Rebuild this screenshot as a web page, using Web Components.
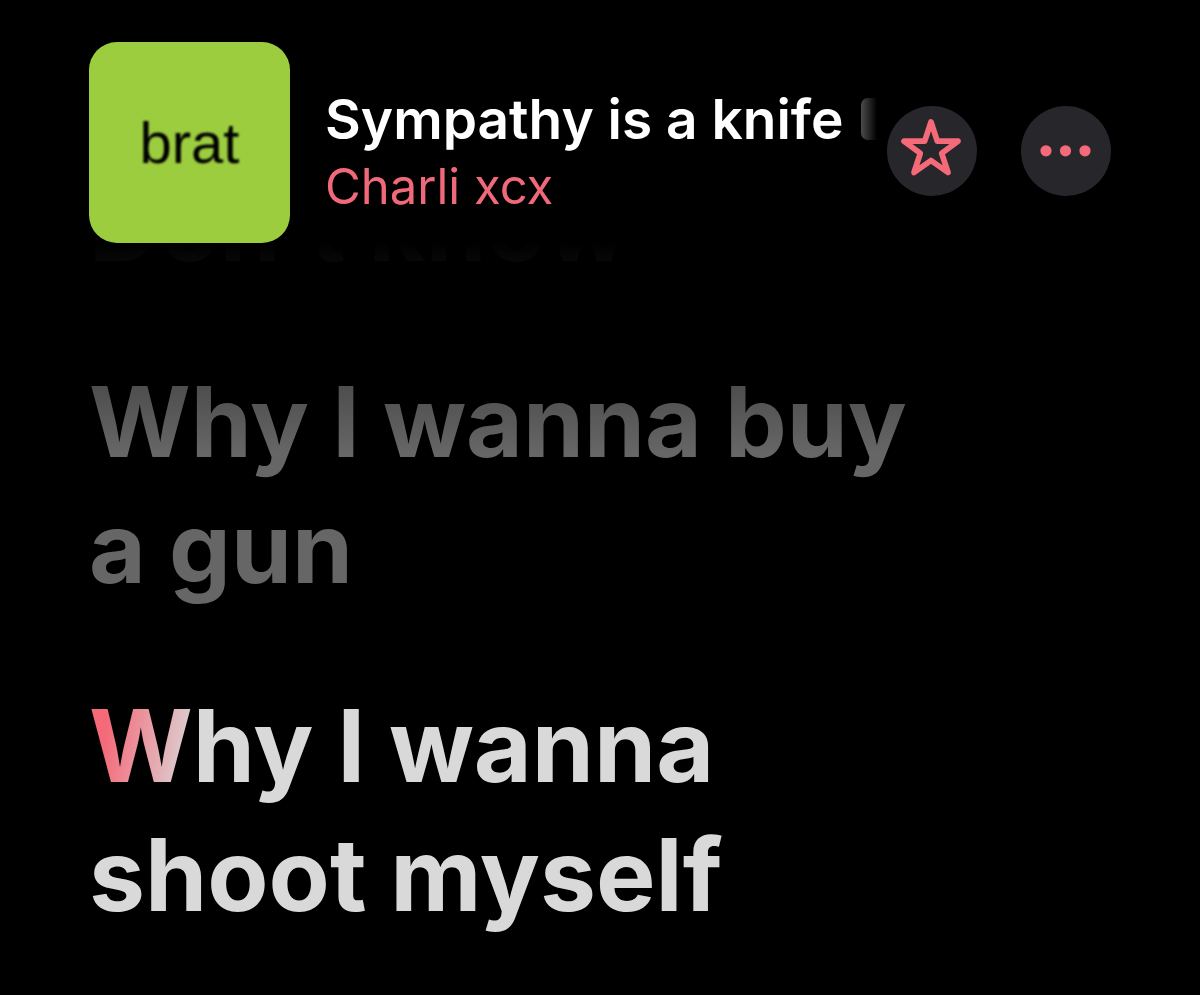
<!DOCTYPE html>
<html lang="en">
<head>
<meta charset="utf-8">
<meta name="viewport" content="width=device-width, initial-scale=1">
<title>Sympathy is a knife</title>
<style>
    body {
        margin: 0;
        min-height: 100vh;
        background: #000;
        color: #fff;
        font-family: Inter, "Liberation Sans", sans-serif;
        --accent: #f0697a;
        --side: 89px;
    }
</style>
</head>
<body>
<now-playing>
    <track-header slot="header">
        <album-art slot="art">brat</album-art>
        <span slot="title">Sympathy is a knife</span>
        <a slot="artist" href="#artist">Charli xcx</a>
        <round-button slot="actions" label="Favorite">
            <svg viewBox="0 0 90 90" fill="none" stroke="#f56a79" stroke-width="5.700" stroke-linejoin="round">
                <path d="M44 16 L50.300 35.200 H71 L54.700 47.300 L61 66.500 L44 54.500 L27 66.500 L33.300 47.300 L17 35.200 H37.700 Z"/>
            </svg>
        </round-button>
        <round-button slot="actions" label="More">
            <svg viewBox="0 0 90 90" fill="#f56a79">
                <circle cx="25" cy="44.800" r="5.600"/>
                <circle cx="44.500" cy="44.800" r="5.600"/>
                <circle cx="64" cy="44.800" r="5.600"/>
            </svg>
        </round-button>
    </track-header>
    <lyric-line>Don’t know</lyric-line>
    <lyric-line>Why I wanna buy a gun</lyric-line>
    <lyric-line active>Why I wanna shoot myself</lyric-line>
</now-playing>

<script>
class NowPlaying extends HTMLElement {
    constructor() {
        super();
        this.attachShadow({ mode: 'open' }).innerHTML = `
<style>
    :host { display: flex; flex-direction: column; height: 100vh; overflow: hidden; }
    main {
        flex: 1;
        min-height: 0;
        overflow: hidden;
        padding: 0 270px 0 var(--side);
        -webkit-mask-image: linear-gradient(transparent, rgba(0,0,0,.09) 22px, rgba(0,0,0,.76) 143px, #000 210px);
        mask-image: linear-gradient(transparent, rgba(0,0,0,.09) 22px, rgba(0,0,0,.76) 143px, #000 210px);
    }
    .lines { display: flex; flex-direction: column; gap: 70px; margin-top: -80px; }
</style>
<slot name="header"></slot>
<main><div class="lines"><slot></slot></div></main>
`;
    }
}

class TrackHeader extends HTMLElement {
    constructor() {
        super();
        this.attachShadow({ mode: 'open' }).innerHTML = `
<style>
    :host { display: block; }
    header { display: flex; align-items: center; padding: 42px var(--side) 0; }
    .meta { flex: 1; min-width: 0; margin: 20px 10px 0 35px; }
    .title {
        display: flex;
        align-items: center;
        gap: 18px;
        margin: 0;
        font-size: 55px;
        font-weight: 600;
        line-height: 68px;
        white-space: nowrap;
        overflow: hidden;
        -webkit-mask-image: linear-gradient(to left, transparent, #000 30px);
        mask-image: linear-gradient(to left, transparent, #000 30px);
    }
    .explicit { flex: none; width: 42px; height: 42px; border-radius: 7px; background: #8e8e93; }
    .artist { font-size: 49px; line-height: 68px; }
    ::slotted(a) { color: var(--accent); text-decoration: none; }
    .actions { display: flex; gap: 44px; margin-top: 16px; }
</style>
<header>
    <slot name="art"></slot>
    <div class="meta">
        <h1 class="title"><slot name="title"></slot><span class="explicit" role="img" aria-label="Explicit"></span></h1>
        <div class="artist"><slot name="artist"></slot></div>
    </div>
    <div class="actions"><slot name="actions"></slot></div>
</header>
`;
    }
}

class AlbumArt extends HTMLElement {
    constructor() {
        super();
        this.attachShadow({ mode: 'open' }).innerHTML = `
<style>
    :host {
        display: grid;
        place-items: center;
        flex: none;
        width: 201px;
        height: 201px;
        border-radius: 28px;
        background: #9ccd3f;
        color: #000;
        font: 58px "Liberation Sans Narrow", "Liberation Sans", sans-serif;
    }
    span { filter: blur(1px); }
</style>
<span><slot></slot></span>
`;
    }
}

class RoundButton extends HTMLElement {
    constructor() {
        super();
        this.attachShadow({ mode: 'open' }).innerHTML = `
<style>
    :host { display: block; flex: none; }
    button {
        display: block;
        width: 90px;
        height: 90px;
        padding: 0;
        border: 0;
        border-radius: 50%;
        background: #27262b;
        cursor: pointer;
    }
    ::slotted(svg) { display: block; width: 100%; height: 100%; }
</style>
<button type="button"><slot></slot></button>
`;
    }

    connectedCallback() {
        this.shadowRoot.querySelector('button').setAttribute('aria-label', this.getAttribute('label'));
    }
}

class LyricLine extends HTMLElement {
    constructor() {
        super();
        this.attachShadow({ mode: 'open' }).innerHTML = `
<style>
    :host { display: block; }
    p { margin: 0; font-size: 98px; font-weight: 700; line-height: 126px; color: #666; }
    :host([active]) p {
        font-size: 100px;
        line-height: 129px;
        color: #d9d9d9;
    }
    /* the syllable being sung */
    :host([active]) p::first-letter {
        color: transparent;
        background: linear-gradient(100deg, #f56a79 20%, #d9d9d9 95%);
        -webkit-background-clip: text;
        background-clip: text;
    }
</style>
<p><slot></slot></p>
`;
    }
}

customElements.define('now-playing', NowPlaying);
customElements.define('track-header', TrackHeader);
customElements.define('album-art', AlbumArt);
customElements.define('round-button', RoundButton);
customElements.define('lyric-line', LyricLine);
</script>
</body>
</html>
